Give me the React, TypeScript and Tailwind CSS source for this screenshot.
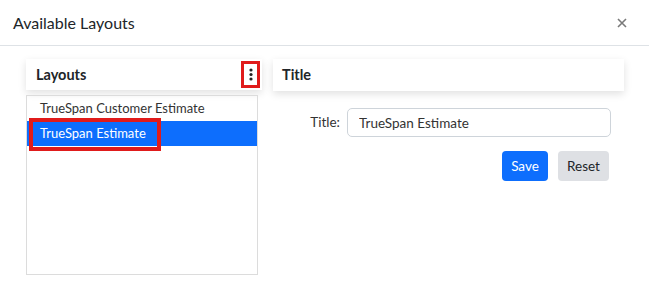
import React from 'react';

const layouts = ['TrueSpan Customer Estimate', 'TrueSpan Estimate'];

const App = () => {
  const selected = 1;

  return (
    <div className="w-[649px] h-[285px] bg-white text-[#212529] overflow-hidden" style={{ fontFamily: 'Lato, sans-serif' }}>
      {/* Header */}
      <div className="flex items-center justify-between h-[46px] pl-[13px] pr-[22px] border-b border-[#dee2e6]">
        <h5 className="text-[16px] leading-none">Available Layouts</h5>
        <button className="leading-none">
          <svg width="10" height="10" viewBox="0 0 10 10" stroke="#7a7a7a" strokeWidth="1.6">
            <path d="M1 1L9 9M9 1L1 9" />
          </svg>
        </button>
      </div>

      {/* Body */}
      <div className="flex gap-[11px] pl-[26px] pr-[25px] pt-[13px]">
        {/* Layouts column */}
        <div className="w-[236px] flex flex-col">
          <div className="h-[31px] flex items-center justify-between pl-[10px] pr-[2px] bg-white shadow-[0_3px_8px_rgba(0,0,0,0.12)]">
            <span className="font-bold text-[14.5px]">Layouts</span>
            <button className="w-[19px] h-[27px] border-[3px] border-[#e01b1b] flex items-center justify-center">
              <svg width="4" height="13" viewBox="0 0 4 13" fill="#222">
                <circle cx="2" cy="2" r="1.6" />
                <circle cx="2" cy="6.5" r="1.6" />
                <circle cx="2" cy="11" r="1.6" />
              </svg>
            </button>
          </div>
          <div className="mt-[5px] w-[232px] h-[180px] border border-[#dcdcdc] flex flex-col">
            {layouts.map((name, i) => (
              <div
                key={name}
                className={`relative h-[25px] flex items-center pl-[13px] text-[13px] ${
                  i === selected ? 'bg-[#0d6efd] text-white' : 'text-[#333]'
                }`}
              >
                {name}
                {i === selected && (
                  <span className="absolute left-[2px] -top-[3px] w-[132px] h-[33px] border-[4px] border-[#e01b1b]"></span>
                )}
              </div>
            ))}
          </div>
        </div>

        {/* Title column */}
        <div className="flex-1 flex flex-col">
          <div className="h-[32px] flex items-center pl-[9px] bg-white shadow-[0_3px_8px_rgba(0,0,0,0.12)]">
            <span className="font-bold text-[14.5px]">Title</span>
          </div>
          <div className="flex items-center mt-[17px]">
            <label className="w-[74px] text-right pr-[7px] text-[13.5px] text-[#333]">Title:</label>
            <input
              readOnly
              value="TrueSpan Estimate"
              className="w-[264px] h-[29px] border border-[#ced4da] rounded-[5px] px-[11px] text-[13.5px] text-[#333] outline-none"
            />
          </div>
          <div className="flex justify-end gap-[10px] mt-[14px] pr-[15px]">
            <button className="w-[46px] h-[30px] rounded-[4px] bg-[#0d6efd] text-white text-[13.5px]">Save</button>
            <button className="w-[51px] h-[30px] rounded-[4px] bg-[#dee0e4] text-[#212529] text-[13.5px]">Reset</button>
          </div>
        </div>
      </div>
    </div>
  );
};

export default App;
